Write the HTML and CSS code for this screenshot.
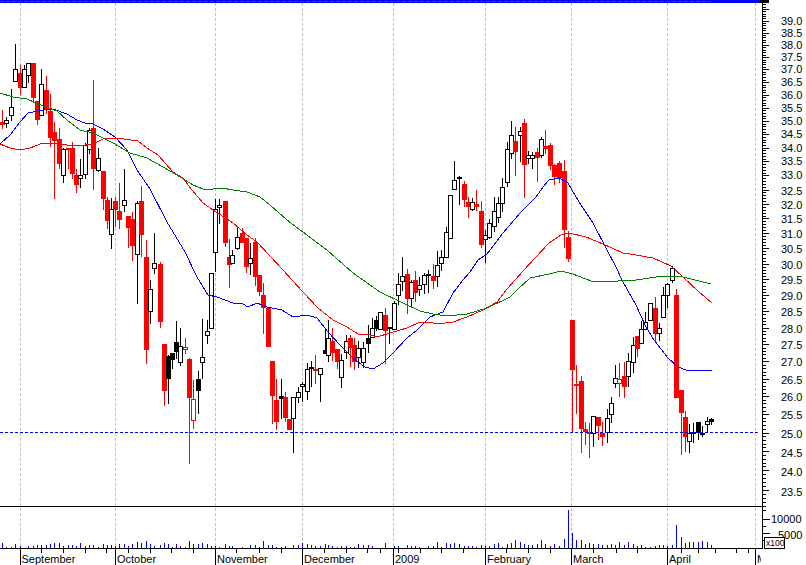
FILE: index.html
```html
<!DOCTYPE html>
<html lang="en">
<head>
<meta charset="utf-8">
<title>Price chart</title>
<link rel="stylesheet" href="styles.css">
</head>
<body>
<svg id="chart" class="chart" xmlns="http://www.w3.org/2000/svg" width="806" height="565" viewBox="0 0 806 565">
  <defs><clipPath id="axis-clip"><rect x="0" y="548" width="761" height="17"></rect></clipPath></defs>
</svg>
<script src="chart.js"></script>
</body>
</html>
```
FILE: styles.css
```css
html, body { margin: 0; padding: 0; background: #fff; }
.chart { display: block; font-family: "Liberation Sans", Arial, sans-serif; font-size: 11px; fill: #000; }
.chart rect, .chart line, .chart polyline { shape-rendering: crispEdges; }
.top-blue { fill: #0000ff; }
.top-red { stroke: #ff0000; stroke-width: 1; stroke-dasharray: 4 2; }
.grid { stroke: #c0c0c0; stroke-width: 1; stroke-dasharray: 3 2; }
.level { stroke: #0000ff; stroke-width: 1; stroke-dasharray: 3 2; }
.axis { stroke: #000; stroke-width: 1; }
.rule { stroke: #000; stroke-width: 1; }
.ma { fill: none; stroke-width: 1; }
.ma-blue { stroke: #0000ff; }
.ma-red { stroke: #ff0000; }
.ma-green { stroke: #008000; }
.vol { fill: #0000ff; }
.c-r { fill: #ff0000; }
.c-k { fill: #000; }
.body-w { fill: #fff; stroke: #000; stroke-width: 1; }
.body-o { fill: #fff; stroke: #ff0000; stroke-width: 1; }
.body-b { fill: #000; }
.x100-box { fill: #fff; stroke: #000; stroke-width: 1; }
.x100 { font-size: 8.5px; }
```
FILE: chart.js
```js
var svg = document.getElementById('chart');
var NS = 'http://www.w3.org/2000/svg';
function el(name, attrs, text, parent) {
  var e = document.createElementNS(NS, name);
  for (var k in attrs) e.setAttribute(k, attrs[k]);
  if (text != null) e.textContent = text;
  (parent || svg).appendChild(e);
  return e;
}
function hline(x1, x2, y, cls) { el('line', { x1: x1, x2: x2, y1: y + 0.5, y2: y + 0.5, 'class': cls }); }
function vline(x, y1, y2, cls) { el('line', { x1: x + 0.5, x2: x + 0.5, y1: y1, y2: y2, 'class': cls }); }
function rect(x, y, w, h, cls) { el('rect', { x: x, y: y, width: w, height: h, 'class': cls }); }

// [zoomX, high, low, top, bottom, type, volume]
var groups = [
 [0, [
 [6,110,128,122,124,'r',5],[19,117,127,120,123,'w',1],[34,89,120,107,115,'w',1],[47,44,81,69,81,'w',4],
 [60,65,94,73,87,'r',2],[72,65,87,69,87,'w',0],[85,63,82,63,75,'w',2],[99,63,102,63,97,'r',2],
 [113,101,124,101,119,'r',3],[125,69,115,84,115,'w',3],[139,76,113,90,109,'r',3],[151,94,146,111,137,'r',4],
 [164,122,198,132,140,'r',5],[177,128,168,139,163,'r',5],[190,148,182,149,175,'w',2],[204,148,168,148,149,'r',3],
 [217,142,178,148,173,'r',3],[229,169,192,175,184,'r',2],[241,159,187,175,178,'w',5],[256,143,178,145,174,'w',2],
 [268,128,153,130,149,'w',3],[281,80,189,128,168,'r',3],[294,148,171,158,170,'w',1],[309,171,209,171,198,'r',4],
 [322,197,228,200,220,'r',3],[334,198,248,209,234,'w',3],[347,197,226,201,209,'r',2],[359,183,228,211,219,'r',4],
 [372,169,211,200,205,'w',4],[386,216,247,216,227,'r',2],[398,212,260,219,245,'r',4],[411,201,303,203,254,'w',6],
 [424,186,256,201,234,'r',5],[439,240,363,257,349,'r',7],[451,280,323,289,311,'w',4],[464,233,273,263,268,'w',2],
 [480,262,327,264,321,'r',3],[492,344,405,344,390,'r',5],[504,355,403,356,378,'b',4],[517,353,368,353,359,'b',1],
 [530,321,358,342,351,'b',4],[542,328,365,346,362,'w',2],[555,338,353,347,349,'o',1],[568,358,463,359,397,'r',7],
 [580,380,428,399,420,'o',4],[595,371,413,379,390,'b',4],[607,319,378,357,362,'w',5],[621,320,343,331,335,'w',4],
 [633,273,328,273,328,'w',2],[646,199,271,209,252,'w',2],[658,199,223,205,207,'w',1],[675,201,246,201,242,'r',4],
 [688,239,287,257,264,'r',2],[698,250,263,255,263,'w',2],[711,226,249,237,248,'w',0],[726,228,242,233,242,'r',1],
 [739,238,272,238,266,'r',0],[752,243,274,258,263,'w',3],[766,238,285,242,276,'r',3],[779,275,295,275,291,'r',1],
 [790,283,333,295,307,'r',7],[804,308,346,308,346,'r',3]
 ]],
 [270, [
 [7,361,423,361,395,'r',3],[20,379,429,400,421,'r',1],[33,379,418,396,398,'b',1],[46,392,421,397,417,'r',2],
 [58,419,429,419,429,'r',0],[71,397,452,397,418,'w',3],[85,387,402,392,397,'w',3],[98,382,401,384,386,'w',5],
 [111,363,399,369,391,'w',4],[124,361,386,367,368,'b',3],[137,355,383,369,370,'r',2],[150,368,401,368,374,'w',2],
 [165,328,353,350,353,'b',4],[176,320,361,338,355,'w',3],[188,328,360,341,352,'r',2],[202,349,368,349,361,'r',1],
 [214,354,387,360,377,'w',2],[228,335,358,341,352,'w',2],[242,335,366,338,347,'r',1],[254,338,369,345,361,'r',1],
 [266,341,367,348,357,'w',4],[280,342,367,348,362,'w',3],[295,325,352,338,343,'b',3],[307,318,337,328,337,'w',2],
 [320,316,330,320,328,'b',0],[332,312,329,312,329,'w',0],[346,308,363,315,330,'r',5],[359,327,343,327,328,'b',0],
 [372,301,329,303,329,'w',2],[385,273,304,284,295,'w',2],[398,257,290,276,281,'w',0],[411,269,313,274,298,'r',3],
 [423,280,305,282,298,'w',2],[437,271,301,280,292,'r',2],[449,277,295,285,289,'w',1],[462,273,293,275,284,'w',0],
 [475,270,292,274,275,'b',2],[489,264,288,276,280,'r',2],[502,251,286,265,276,'w',6],[515,250,270,257,263,'w',1],
 [528,227,257,232,257,'w',5],[540,195,238,195,238,'w',4],[553,161,189,180,189,'w',5],[567,176,204,177,178,'b',4],
 [582,181,206,184,199,'r',2],[595,197,217,202,206,'r',2],[606,198,210,202,209,'w',2],[619,190,210,204,206,'r',1],
 [633,201,247,211,244,'r',3],[646,230,262,235,239,'w',2],[658,219,238,223,237,'w',2],[672,197,231,211,226,'w',4],
 [684,197,222,203,217,'w',5],[697,178,211,187,203,'w',1],[711,142,186,149,182,'w',4],[724,121,158,135,153,'w',5],
 [737,127,175,141,151,'r',8],[750,127,161,131,135,'w',6],[763,119,197,123,164,'r',4],[775,151,163,155,158,'w',3],
 [788,152,168,155,158,'w',3]
 ]],
 [536, [
 [5,148,181,152,157,'r',4],[15,137,157,139,155,'w',8],[28,130,153,146,148,'r',4],[44,143,169,145,165,'r',2],
 [56,164,184,165,176,'r',4],[69,161,182,163,177,'r',2],[84,160,247,171,229,'r',9],[96,231,261,237,258,'r',38],
 [110,320,432,320,369,'r',15],[122,365,413,384,385,'r',8],[136,376,452,381,428,'r',8],[149,422,444,429,431,'r',4],
 [160,423,457,432,433,'r',5],[172,416,446,416,433,'w',4],[187,417,439,417,425,'r',4],[200,422,445,433,436,'r',3],
 [213,409,442,418,432,'w',3],[226,397,422,403,414,'w',4],[238,365,387,378,383,'w',3],[251,363,396,379,383,'o',6],
 [265,362,397,376,386,'r',3],[277,353,386,361,376,'w',6],[291,337,372,345,362,'w',4],[305,336,356,336,348,'r',2],
 [317,321,343,329,343,'w',3],[329,312,329,322,329,'w',1],[343,303,320,303,320,'w',1],[358,297,340,308,333,'r',2],
 [370,323,340,328,333,'w',3],[382,287,317,295,317,'w',3],[394,283,307,284,295,'w',2],[408,266,282,268,280,'w',3],
 [422,289,397,295,397,'r',23],[436,390,454,390,412,'r',11],[448,411,451,417,436,'r',5],[459,424,452,433,441,'w',6],
 [473,423,442,432,433,'b',6],[487,422,439,422,432,'b',6],[500,426,436,433,434,'b',7],[513,417,432,421,424,'w',6],
 [527,418,424,419,421,'b',3]
 ]]
];

var blue = '0,144 10,135 20,122 28,113 33,112 43,110 53,109 67,114 77,120 85,123 93,124 103,129 115,137 127,150 137,170 150,189 167,222 185,252 197,277 208,295 217,297 233,303 243,304 248,307 257,303 267,307 282,310 293,317 307,315 317,318 328,332 340,345 353,358 365,367 373,369 383,363 393,353 407,338 417,330 430,317 443,312 453,293 463,280 470,272 478,260 487,254 503,233 520,213 536,197 543,187 549,180 559,178 568,183 579,202 593,223 606,248 616,267 623,282 636,305 646,327 654,340 668,358 678,367 686,370 701,370 704,371 712,370';
var red = '0,144 10,148 20,150 30,148 43,143 57,144 77,146 93,144 103,139 117,138 138,141 147,148 158,155 173,172 183,178 192,190 203,203 213,210 233,223 247,235 257,242 270,256 283,270 303,292 318,308 333,320 347,327 358,334 367,334 377,337 390,333 407,328 420,322 428,322 438,324 453,322 467,317 483,310 497,302 507,289 523,271 536,257 549,243 561,235 569,233 586,237 603,244 623,253 636,255 653,258 671,266 683,277 699,292 712,303';
var green = '0,93 13,97 27,99 43,106 57,111 67,120 80,130 93,133 113,143 130,153 147,158 163,167 177,175 193,185 203,189 213,189 222,188 233,190 247,192 260,197 270,205 287,220 303,232 327,250 353,273 380,292 403,303 420,311 433,314 447,316 467,314 487,308 510,297 518,289 530,278 549,274 561,271 573,274 591,281 618,281 636,280 663,276 683,277 711,284';

var months = [[20,'September',21.5],[115,'October',117],[215,'November',217],[302,'December',304],[393,'2009',395],[485,'February',487],[571,'March',573],[667,'April',669],[755,'M',757]];
var minor = [41,63,85,106,128,150,171,193,236,259,281,324,346,367,380,398,420,441,463,506,528,550,593,616,637,681,698,715,736,748];

// top bar
rect(0, 0, 760, 3, 'top-blue');
hline(0, 710, 1, 'top-red');

// month grid
months.forEach(function (m) { vline(m[0], 3, 548, 'grid'); });

// candles and volume
groups.forEach(function (g) {
  g[1].forEach(function (c) {
    var x = Math.floor(g[0] + c[0] / 3), hi = c[1], lo = c[2], top = c[3], bot = c[4], t = c[5], vol = c[6];
    if (lo < bot) lo = bot;
    if (hi > top) hi = top;
    rect(x, hi, 1, lo - hi + 1, (t === 'r' || t === 'o') ? 'c-r' : 'c-k');
    if (t === 'r') rect(x - 2, top, 5, bot - top + 1, 'c-r');
    else if (t === 'b') rect(x - 2, top, 5, bot - top + 1, 'body-b');
    else rect(x - 1.5, top + 0.5, 4, Math.max(bot - top, 1), t === 'w' ? 'body-w' : 'body-o');
    if (vol) rect(x, 548 - vol, 1, vol, 'vol');
  });
});

// moving averages and level line
el('polyline', { points: blue, 'class': 'ma ma-blue' });
el('polyline', { points: red, 'class': 'ma ma-red' });
el('polyline', { points: green, 'class': 'ma ma-green' });
hline(0, 759, 432, 'level');

// frame rules
hline(0, 762, 506, 'rule');
hline(0, 762, 548, 'rule');
vline(762, 0, 549, 'axis');
rect(760, 0, 9, 3, 'c-k');

// price axis
function py(p) { return Math.round(432.5 - 926 * Math.log(p / 25)); }
for (var i = 231; i <= 399; i++) {
  var p = i / 10, y = py(p), major = i % 5 === 0;
  hline(762, major ? 769 : 766, y, 'axis');
  if (major && i >= 235 && i <= 390) {
    el('text', { x: 781, y: y + (i >= 330 ? 4 : i > 245 ? 5 : 6) }, p.toFixed(1));
  }
}

// volume axis
[510, 519, 526, 533, 540].forEach(function (y, n) { hline(762, n % 2 ? 770 : 766, y, 'axis'); });
el('text', { x: 771, y: 523 }, '10000');
el('text', { x: 778, y: 539 }, '5000');
rect(764.5, 537.5, 20, 10.5, 'x100-box');
el('text', { x: 766, y: 546, 'class': 'x100' }, 'x100');

// time axis
months.forEach(function (m) {
  vline(m[0], 548, 565, 'axis');
  var t = el('text', { x: m[2], y: 563 }, m[1]);
  if (m[1] === 'M') t.setAttribute('clip-path', 'url(#axis-clip)');
});
minor.forEach(function (x) { vline(x, 548, 553, 'axis'); });
```
